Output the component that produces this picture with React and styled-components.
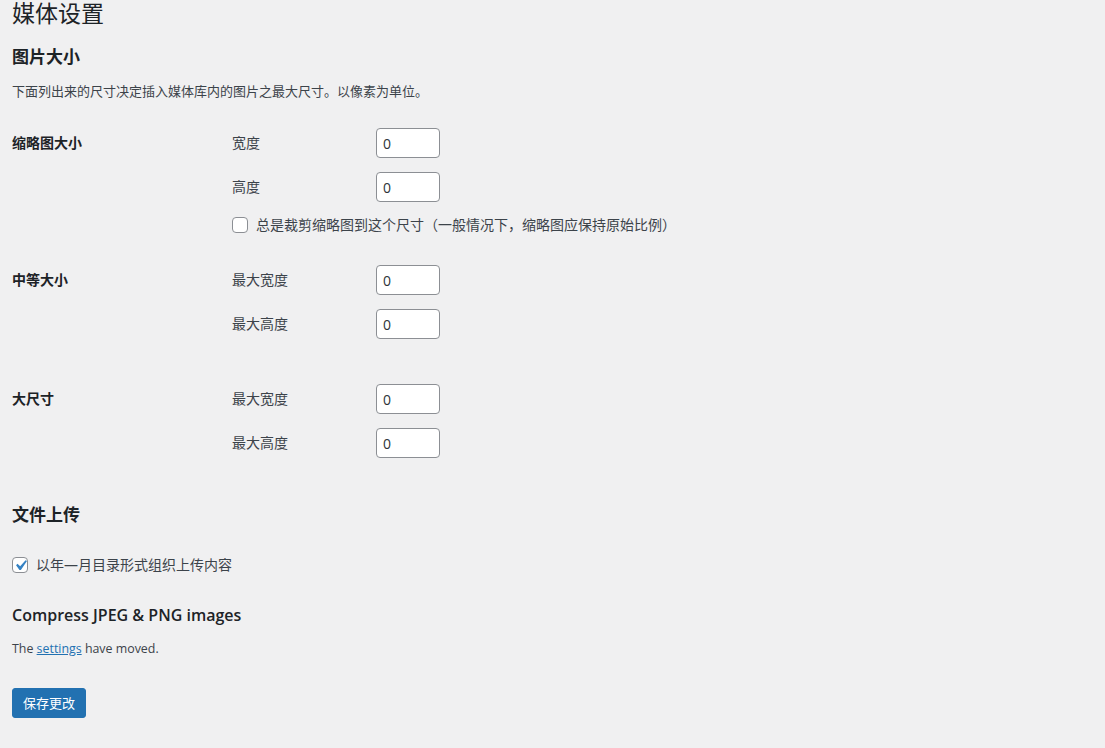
import React from "react";
import styled, { createGlobalStyle } from "styled-components";

const Global = createGlobalStyle`
  html, body { margin: 0; padding: 0; background: #f0f0f1; }
  body {
    font-family: "Open Sans", "Noto Sans CJK SC", sans-serif;
    font-size: 13px;
    color: #3c434a;
  }
`;

const Wrap = styled.div`
  padding: 2px 12px 0;
  display: flex;
  flex-direction: column;
  align-items: flex-start;
`;

const Title = styled.h1`
  margin: 0;
  font-size: 23px;
  font-weight: 400;
  line-height: 22px;
  color: #1d2327;
`;

const SectionTitle = styled.h2`
  margin: ${(p) => p.$mt}px 0 0;
  font-size: ${(p) => (p.$latin ? 16 : 17)}px;
  font-weight: 600;
  line-height: 22px;
  color: #1d2327;
`;

const Para = styled.p`
  margin: ${(p) => p.$mt}px 0 0;
  line-height: 18px;
  font-size: ${(p) => (p.$latin ? 12.4 : 13)}px;
`;

const Link = styled.a`
  color: #2271b1;
  text-decoration: underline;
`;

const FormRow = styled.div`
  display: grid;
  grid-template-columns: 220px auto;
  margin-top: ${(p) => p.$mt}px;
`;

const RowHead = styled.div`
  font-size: 14px;
  font-weight: 600;
  color: #1d2327;
  line-height: 30px;
`;

const Fields = styled.div`
  display: flex;
  flex-direction: column;
  gap: 14px;
`;

const Field = styled.div`
  display: grid;
  grid-template-columns: 144px 64px;
  align-items: center;
`;

const FieldLabel = styled.label`
  font-size: 14px;
  line-height: 30px;
`;

const NumberInput = styled.input`
  box-sizing: border-box;
  width: 64px;
  height: 30px;
  border: 1px solid #8c8f94;
  border-radius: 4px;
  background: #fff;
  padding: 0 6px;
  font-family: "Open Sans", sans-serif;
  font-size: 14px;
  color: #2c3338;
  margin: 0;
`;

const CheckRow = styled.label`
  display: flex;
  align-items: center;
  gap: 8px;
  font-size: 14px;
  line-height: 18px;
  margin-top: ${(p) => p.$mt || 0}px;
`;

const Box = styled.span`
  box-sizing: border-box;
  width: 16px;
  height: 16px;
  border: 1px solid #8c8f94;
  border-radius: 4px;
  background: #fff;
  display: inline-flex;
  align-items: center;
  justify-content: center;
  flex: none;
`;

const Button = styled.button`
  margin-top: 30px;
  height: 30px;
  padding: 0 10px;
  background: #2271b1;
  border: 1px solid #2271b1;
  border-radius: 3px;
  color: #fff;
  font-family: "Open Sans", "Noto Sans CJK SC", sans-serif;
  font-size: 13px;
  line-height: 28px;
`;

const CheckMark = styled.svg`
  flex: none;
  width: 21px;
  height: 21px;
`;

const Check = ({ checked }) => (
  <Box>
    {checked && (
      <CheckMark viewBox="0 0 20 20">
        <path
          d="M14.83 4.89l1.34.94-5.81 8.38H9.02L5.78 9.67l1.34-1.25 2.57 2.4z"
          fill="#3582c4"
        />
      </CheckMark>
    )}
  </Box>
);

const SizeRow = ({ mt, title, fields, children }) => (
  <FormRow $mt={mt}>
    <RowHead>{title}</RowHead>
    <Fields>
      {fields.map((f) => (
        <Field key={f}>
          <FieldLabel>{f}</FieldLabel>
          <NumberInput defaultValue="0" />
        </Field>
      ))}
      {children}
    </Fields>
  </FormRow>
);

export default function App() {
  return (
    <>
      <Global />
      <Wrap>
        <Title>媒体设置</Title>
        <SectionTitle $mt={22}>图片大小</SectionTitle>
        <Para $mt={14}>下面列出来的尺寸决定插入媒体库内的图片之最大尺寸。以像素为单位。</Para>
        <SizeRow mt={28} title="缩略图大小" fields={["宽度", "高度"]}>
          <CheckRow>
            <Check />
            总是裁剪缩略图到这个尺寸（一般情况下，缩略图应保持原始比例）
          </CheckRow>
        </SizeRow>
        <SizeRow mt={31} title="中等大小" fields={["最大宽度", "最大高度"]} />
        <SizeRow mt={45} title="大尺寸" fields={["最大宽度", "最大高度"]} />
        <SectionTitle $mt={46}>文件上传</SectionTitle>
        <CheckRow $mt={30}>
          <Check checked />
          以年—月目录形式组织上传内容
        </CheckRow>
        <SectionTitle $mt={30} $latin>
          Compress JPEG &amp; PNG images
        </SectionTitle>
        <Para $mt={14} $latin>
          The <Link href="#">settings</Link> have moved.
        </Para>
        <Button>保存更改</Button>
      </Wrap>
    </>
  );
}
